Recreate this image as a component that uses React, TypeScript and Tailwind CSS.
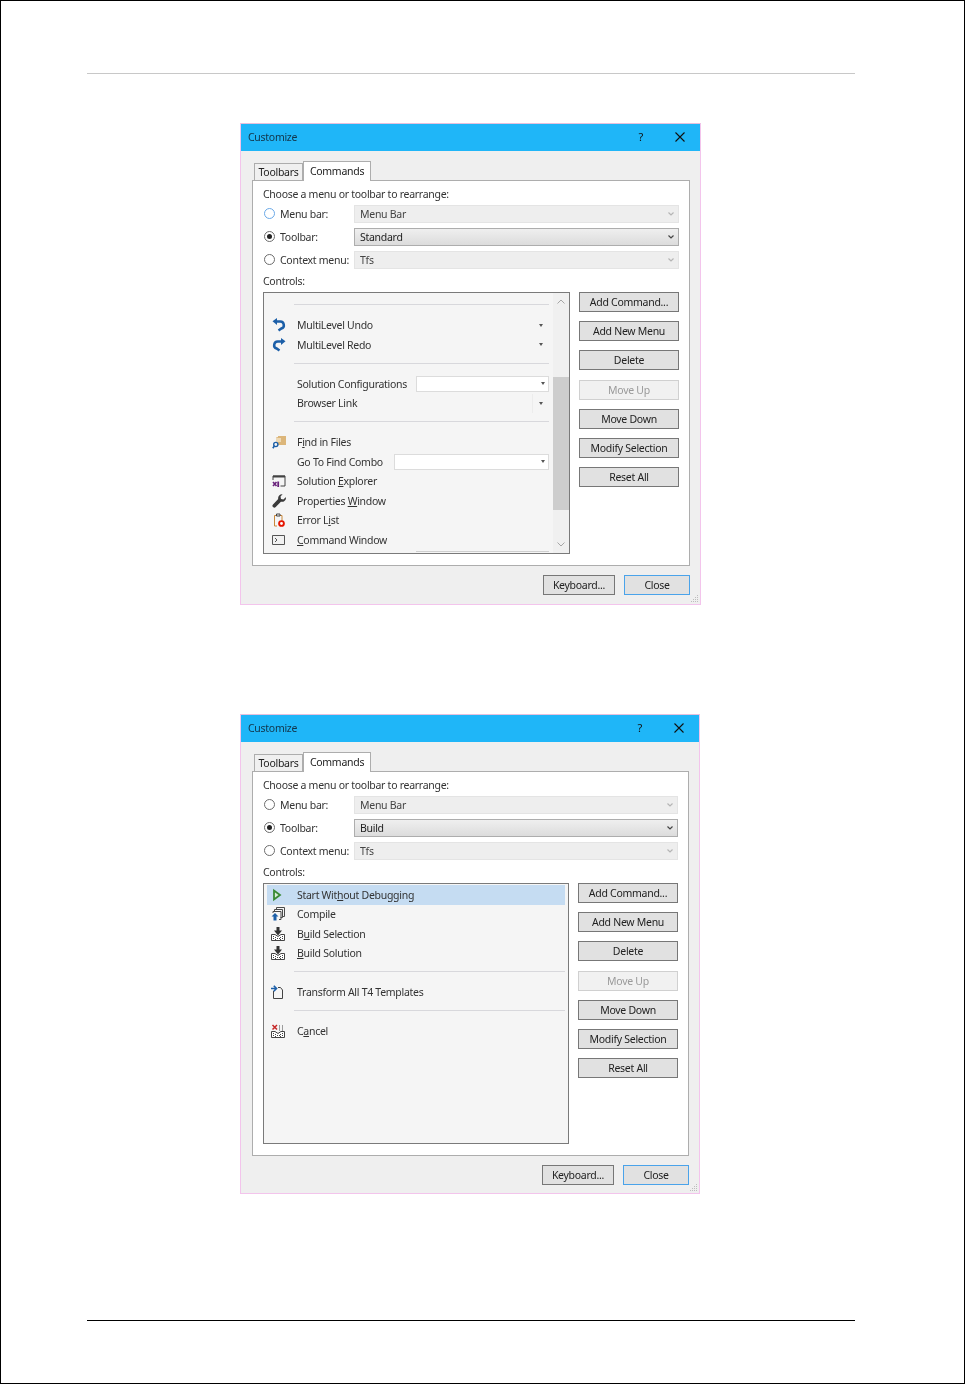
import type { ReactNode } from 'react'

function UndoIcon() {
  return (
    <svg width="14" height="14" viewBox="0 0 14 14" fill="none">
      <path d="M3 3.500h5a3.600 3.600 0 0 1 1.400 7L6.500 12.500" stroke="#1c5fa8" strokeWidth="2.500" />
      <path d="M.5 3.200 5 0v7z" fill="#1c5fa8" />
    </svg>
  )
}

function RedoIcon() {
  return (
    <svg width="14" height="14" viewBox="0 0 14 14" fill="none">
      <path d="M10 3.500H6a3.600 3.600 0 0 0-1.400 7L7.500 12.500" stroke="#1c5fa8" strokeWidth="2.500" />
      <path d="M13.500 3.200 9 0v7z" fill="#1c5fa8" />
    </svg>
  )
}

function FindIcon() {
  return (
    <svg width="14" height="14" viewBox="0 0 14 14">
      <path d="M4 2.500 6 2V1h8v9H6z" fill="#dcb67a" />
      <path d="M4 3h5v4H4z" fill="#eed9b5" />
      <circle cx="3.800" cy="9.500" r="2.100" fill="#f5f5f5" stroke="#1c5fa8" strokeWidth="1.400" />
      <path d="M2.400 11 .8 13.200" stroke="#1c5fa8" strokeWidth="1.600" />
    </svg>
  )
}

function ExplorerIcon() {
  return (
    <svg width="14" height="14" viewBox="0 0 14 14" fill="none">
      <path d="M1 6V2h12v10H8.500" stroke="#424242" />
      <path d="M1 2.500h12" stroke="#424242" strokeWidth="2" />
      <path d="M1 8l3.500 4M4.500 8 1 12" stroke="#68217a" strokeWidth="1.600" />
      <path d="M6.200 7.500v5.500" stroke="#68217a" strokeWidth="1.800" />
    </svg>
  )
}

function WrenchIcon() {
  return (
    <svg width="14" height="14" viewBox="0 0 14 14">
      <path d="M14 3.800a4 4 0 0 1-5.100 3.900L3.700 13a1.800 1.800 0 0 1-2.700-2.600L6.200 5.100A4 4 0 0 1 10.600.3L8.500 2.600l.5 2.400 2.400.5L13.700 3.200z" fill="#3a3a3a" />
    </svg>
  )
}

function ErrorListIcon() {
  return (
    <svg width="14" height="14" viewBox="0 0 14 14" fill="none">
      <path d="M2.500 2.500h7.500v5.500M5 13H2.500V2.500" stroke="#c8873a" />
      <path d="M4.500 3V1h3.500v2z" fill="#f5f5f5" stroke="#424242" />
      <circle cx="9.500" cy="10.500" r="2.400" fill="#fff" stroke="#e51400" strokeWidth="1.900" />
    </svg>
  )
}

function ConsoleIcon() {
  return (
    <svg width="14" height="14" viewBox="0 0 14 14" fill="none" stroke="#555">
      <path d="M.5 2.500h12v9H.5z" fill="#f2f2f2" />
      <path d="M3 5l2 2-2 2" />
    </svg>
  )
}

function PlayIcon() {
  return (
    <svg width="14" height="14" viewBox="0 0 14 14">
      <path d="M3 2.500v9L9 7z" fill="#d8edd6" stroke="#388a34" strokeWidth="1.800" />
    </svg>
  )
}

function CompileIcon() {
  return (
    <svg width="14" height="14" viewBox="0 0 14 14" fill="none" stroke="#4a4a4a">
      <path d="M5.500 2.500v-2h8v9h-2" />
      <path d="M3.500 4.500v-2h8v8h-2" />
      <path d="M2 6V4.500h8v8H8" />
      <path d="M.5 9.500 4 6l3.500 3.500H5.500v4h-3v-4z" fill="#1c5fa8" stroke="none" />
    </svg>
  )
}

function BuildIcon({ cross }: { cross?: boolean }) {
  return (
    <svg width="14" height="14" viewBox="0 0 14 14" fill="none">
      <path d="M.5 7.500h3.500l3 2 3-2h3.500v6H.5z" fill="#fff" stroke="#444" />
      <path
        d="M2 9.500h1M2 11.500h1M4 10.500h1M6 11.500h1M8 11.500h1M9 10.500h1M11 9.500h1M11 11.500h1M4 12.500h1M9 12.500h1"
        stroke="#444"
        strokeWidth="1.200"
      />
      {cross ? (
        <>
          <path d="M1.500 1l4.500 4.500M6 1 1.500 5.500" stroke="#c62828" strokeWidth="1.500" />
          <path d="M8 2h1M11 2h1M8 4h1M11 4h1M8 6h1M11 6h1" stroke="#444" strokeWidth="1.200" />
        </>
      ) : (
        <path d="M5.500 0h3v3.500H11L7 8.500 3 3.500h2.500z" fill="#333" />
      )}
    </svg>
  )
}

function TransformIcon() {
  return (
    <svg width="14" height="14" viewBox="0 0 14 14" fill="none">
      <path d="M2.500 6v7.500h9V5l-2-2.500H7" stroke="#444" />
      <path d="M0 3.500h4.500M2.800 .8l2.700 2.700-2.700 2.700" stroke="#1c5fa8" strokeWidth="1.600" />
    </svg>
  )
}

function Radio({ checked, focus }: { checked?: boolean; focus?: boolean }) {
  return (
    <span
      className={`ml-[1px] w-[11px] h-[11px] rounded-full border bg-white flex items-center justify-center ${
        focus ? 'border-[#6aa9e8]' : 'border-[#6d6d6d]'
      }`}
    >
      {checked && <span className="w-[5px] h-[5px] rounded-full bg-[#222]" />}
    </span>
  )
}

function Chevron({ color }: { color: string }) {
  return (
    <svg width="6" height="4" viewBox="0 0 6 4" fill="none" stroke={color} strokeWidth="1.200">
      <path d="M.5.500 3 3 5.500.5" />
    </svg>
  )
}

function PickerRow({
  label,
  value,
  checked,
  focus,
}: {
  label: string
  value: string
  checked?: boolean
  focus?: boolean
}) {
  return (
    <div className="flex items-center h-[23px]">
      <div className="w-[17px] flex-none">
        <Radio checked={checked} focus={focus} />
      </div>
      <div className="w-[74px] flex-none text-[#333] whitespace-nowrap">{label}</div>
      <div
        className={`flex-1 h-[18px] flex items-center justify-between pl-[5px] pr-[4px] border ${
          checked
            ? 'bg-gradient-to-b from-[#efefef] to-[#dcdcdc] border-[#adadad] text-[#222]'
            : 'bg-[#eeeeee] border-[#e4e4e4] text-[#444]'
        }`}
      >
        <span>{value}</span>
        <Chevron color={checked ? '#444' : '#b5b5b5'} />
      </div>
    </div>
  )
}

function Btn({ label, disabled, primary, w }: { label: string; disabled?: boolean; primary?: boolean; w?: string }) {
  return (
    <div
      className={`${w ?? 'w-full'} h-[20px] flex items-center justify-center border ${
        disabled
          ? 'bg-[#f1f1f1] border-[#d0d0d0] text-[#9a9a9a]'
          : primary
            ? 'bg-[#e1e1e1] border-[#4aa3ea] text-[#222]'
            : 'bg-[#e1e1e1] border-[#777] text-[#222]'
      }`}
    >
      {label}
    </div>
  )
}

function DropArrow() {
  return <span className="w-0 h-0 border-x-[2px] border-x-transparent border-t-[3px] border-t-[#555]" />
}

function ListRow({
  icon,
  children,
  combo,
  arrow,
  divider,
  col = 'w-[33px] pl-[8px]',
}: {
  icon?: ReactNode
  children: ReactNode
  combo?: string
  arrow?: boolean
  divider?: boolean
  col?: string
}) {
  return (
    <div className="h-[19.5px] flex items-center text-[#333]">
      <div className={`${col} flex-none flex items-center`}>{icon}</div>
      <div className="whitespace-nowrap flex-none">{children}</div>
      {combo && (
        <div className={`ml-auto h-[16px] bg-white border border-[#dcdcdc] flex items-center justify-end pr-[3px] ${combo}`}>
          <DropArrow />
        </div>
      )}
      {divider && <span className="ml-auto mr-[6px] h-[19px] w-px bg-[#ececec]" />}
      {arrow && (
        <span className={`${divider ? '' : 'ml-auto'} mr-[6px] flex`}>
          <DropArrow />
        </span>
      )}
    </div>
  )
}

function Sep({ h, left }: { h: string; left: string }) {
  return (
    <div className={`${h} ${left} flex items-center`}>
      <div className="w-full h-px bg-[#d8d8dc]" />
    </div>
  )
}

function StandardList() {
  return (
    <div className="flex-1 h-full flex min-w-0">
      <div className="flex-1 min-w-0 pr-[4px] overflow-hidden">
        <Sep h="h-[22.5px]" left="pl-[30px]" />
        <ListRow icon={<UndoIcon />} arrow>MultiLevel Undo</ListRow>
        <ListRow icon={<RedoIcon />} arrow>MultiLevel Redo</ListRow>
        <Sep h="h-[19.5px] pb-[2px]" left="pl-[30px]" />
        <ListRow combo="w-[133px]">Solution Configurations</ListRow>
        <ListRow arrow divider>Browser Link</ListRow>
        <Sep h="h-[19.5px] pb-[2px]" left="pl-[30px]" />
        <ListRow icon={<FindIcon />}>F<u>i</u>nd in Files</ListRow>
        <ListRow combo="w-[155px]">Go To Find Combo</ListRow>
        <ListRow icon={<ExplorerIcon />}>Solution <u>E</u>xplorer</ListRow>
        <ListRow icon={<WrenchIcon />}>Properties <u>W</u>indow</ListRow>
        <ListRow icon={<ErrorListIcon />}>Error L<u>i</u>st</ListRow>
        <ListRow icon={<ConsoleIcon />}><u>C</u>ommand Window</ListRow>
        <div className="ml-[152px] h-px bg-[#cfcfcf] mt-[1.5px]" />
      </div>
      <div className="w-[16px] flex-none bg-[#f0f0f0] flex flex-col items-center justify-between py-[6px] relative">
        <svg width="8" height="5" viewBox="0 0 8 5" fill="none" stroke="#a6a6a6"><path d="M.5 4.500 4 1l3.500 3.500" /></svg>
        <div className="absolute left-0 right-0 top-[84px] h-[133px] bg-[#cdcdcd]" />
        <svg width="8" height="5" viewBox="0 0 8 5" fill="none" stroke="#a6a6a6"><path d="M.5.500 4 4 7.500.5" /></svg>
      </div>
    </div>
  )
}

function BuildList() {
  const col = 'w-[30px] pl-[4px]'
  return (
    <div className="flex-1 px-[3px] pt-[1px] min-w-0">
      <div className="bg-[#c5dcf2]">
        <ListRow col={col} icon={<PlayIcon />}>Start Wit<u>h</u>out Debugging</ListRow>
      </div>
      <ListRow col={col} icon={<CompileIcon />}>Compile</ListRow>
      <ListRow col={col} icon={<BuildIcon />}>B<u>u</u>ild Selection</ListRow>
      <ListRow col={col} icon={<BuildIcon />}><u>B</u>uild Solution</ListRow>
      <Sep h="h-[19.5px] pb-[2px]" left="pl-[27px]" />
      <ListRow col={col} icon={<TransformIcon />}>Transform All T4 Templates</ListRow>
      <Sep h="h-[19.5px] pb-[2px]" left="pl-[27px]" />
      <ListRow col={col} icon={<BuildIcon cross />}>C<u>a</u>ncel</ListRow>
    </div>
  )
}

function Customize({
  toolbar,
  focusMenu,
  width,
  height,
  panelHeight,
  listWidth,
  listHeight,
  children,
}: {
  toolbar: string
  focusMenu?: boolean
  width: string
  height: string
  panelHeight: string
  listWidth: string
  listHeight: string
  children: ReactNode
}) {
  return (
    <div className={`${width} ${height} border border-[#f3c4ec] border-t-[#e5c0dd] bg-[#efefef] flex flex-col text-[10.5px] tracking-[-0.28px] leading-[14px] relative blur-[0.3px]`}>
      <div className="h-[27px] flex-none bg-[#1fb6f8] flex items-center pl-[7px] pb-[1px] text-[#12354a]">
        <span className="flex-1">Customize</span>
        <span className="mr-[32px] text-[11px] text-[#111]">?</span>
        <svg className="mr-[15px]" width="10" height="10" viewBox="0 0 10 10" stroke="#111" strokeWidth="1.100"><path d="M.5.500l9 9M9.500.500l-9 9" /></svg>
      </div>
      <div className="flex-1 flex flex-col pl-[11px] pr-[10px] pt-[10px]">
        <div className="flex items-end pl-[2px] h-[19px] relative z-10">
          <div className="h-[17px] w-[49px] pb-[1px] bg-[#f0f0f0] border border-b-0 border-[#adadad] flex items-center justify-center text-[#222]">Toolbars</div>
          <div className="h-[20px] w-[68px] pb-[2px] -mb-px bg-white border border-b-0 border-[#adadad] flex items-center justify-center text-[#222]">Commands</div>
        </div>
        <div className={`${panelHeight} bg-white border border-[#adadad] px-[10px] flex flex-col text-[#333]`}>
          <div className="h-[21px] pb-[1px] flex items-end whitespace-nowrap">Choose a menu or toolbar to rearrange:</div>
          <PickerRow label="Menu bar:" value="Menu Bar" focus={focusMenu} />
          <PickerRow label="Toolbar:" value={toolbar} checked />
          <PickerRow label="Context menu:" value="Tfs" />
          <div className="h-[20px] flex items-center">Controls:</div>
          <div className="flex gap-[9px] mt-[1px]">
            <div className={`${listWidth} ${listHeight} flex-none bg-[#f5f5f5] border border-[#7a7a7a] flex overflow-hidden`}>
              {children}
            </div>
            <div className="flex-1 flex flex-col gap-[9.2px]">
              <Btn label="Add Command..." />
              <Btn label="Add New Menu" />
              <Btn label="Delete" />
              <Btn label="Move Up" disabled />
              <Btn label="Move Down" />
              <Btn label="Modify Selection" />
              <Btn label="Reset All" />
            </div>
          </div>
        </div>
        <div className="flex justify-end gap-[9px] mt-[9px]">
          <Btn label="Keyboard..." w="w-[72px]" />
          <Btn label="Close" primary w="w-[66px]" />
        </div>
      </div>
      <svg className="absolute right-[1px] bottom-[1px]" width="10" height="10" viewBox="0 0 10 10" fill="#bdbdbd">
        <path d="M8 2h1v1H8zM6 4h1v1H6zM8 4h1v1H8zM4 6h1v1H4zM6 6h1v1H6zM8 6h1v1H8zM2 8h1v1H2zM4 8h1v1H4zM6 8h1v1H6zM8 8h1v1H8z" />
      </svg>
    </div>
  )
}

export default function App() {
  return (
    <div className='w-[965px] h-[1384px] bg-white border border-black flex flex-col font-["Noto_Sans",sans-serif]'>
      <div className="ml-[86px] w-[768px] mt-[72px] h-px bg-[#c8c8c8] flex-none" />
      <div className="flex flex-col items-start pl-[239px] pt-[49px]">
        <Customize toolbar="Standard" focusMenu width="w-[461px]" height="h-[482px]" panelHeight="h-[386px]" listWidth="w-[307px]" listHeight="h-[262px]">
          <StandardList />
        </Customize>
        <div className="h-[109px]" />
        <Customize toolbar="Build" width="w-[460px]" height="h-[480px]" panelHeight="h-[385px]" listWidth="w-[306px]" listHeight="h-[261px]">
          <BuildList />
        </Customize>
      </div>
      <div className="ml-[86px] w-[768px] mt-[126px] h-px bg-black flex-none" />
    </div>
  )
}
